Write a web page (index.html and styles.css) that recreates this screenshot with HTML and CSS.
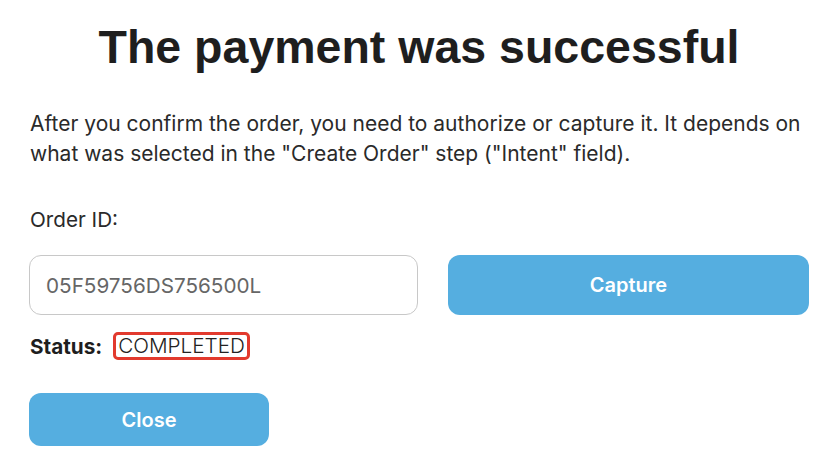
FILE: index.html
```html
<!DOCTYPE html>
<html>
<head>
<meta charset="utf-8">
<link rel="stylesheet" href="styles.css">
</head>
<body>
<div class="modal">
  <h1 class="title">The payment was successful</h1>
  <p class="desc">After you confirm the order, you need to authorize or capture it. It depends on what was selected in the "Create Order" step ("Intent" field).</p>
  <div class="label">Order ID:</div>
  <div class="row">
    <div class="input">05F59756DS756500L</div>
    <button class="btn capture">Capture</button>
  </div>
  <div class="status">
    <span class="status-label">Status:</span>
    <span class="status-value">COMPLETED</span>
  </div>
  <button class="btn close">Close</button>
</div>
</body>
</html>
```
FILE: styles.css
```css
html, body {
  margin: 0;
  padding: 0;
  background: #fff;
}
body {
  font-family: Inter, "Liberation Sans", sans-serif;
  font-size: 20.7px;
  color: #222;
}
.modal {
  width: 780px;
  margin-left: 29px;
  display: flex;
  flex-direction: column;
  align-items: flex-start;
}
.title {
  align-self: stretch;
  font-family: "Liberation Sans", Arial, sans-serif;
  font-weight: 700;
  font-size: 46.5px;
  line-height: 56px;
  margin: 19px 0 0;
  text-align: center;
  color: #1e1e1e;
}
.desc {
  margin: 34px 0 0 1px;
  font-size: 21px;
  line-height: 30px;
  color: #2a2a2a;
}
.label {
  margin: 36px 0 0 1px;
  line-height: 30px;
  color: #2a2a2a;
}
.row {
  align-self: stretch;
  display: flex;
  gap: 30px;
  margin-top: 20px;
}
.input {
  flex: 1;
  height: 60px;
  box-sizing: border-box;
  border: 1px solid #c8c8c8;
  border-radius: 12px;
  padding: 0 16px;
  display: flex;
  align-items: center;
  color: #666;
}
.btn {
  border: none;
  background: #55aee0;
  color: #fff;
  font-family: Inter, "Liberation Sans", sans-serif;
  font-weight: 600;
  font-size: 20px;
  border-radius: 12px;
  cursor: pointer;
  padding: 0;
}
.capture {
  width: 361px;
  height: 60px;
}
.status {
  display: flex;
  align-items: center;
  gap: 11px;
  margin: 17px 0 0 1px;
}
.status-label {
  font-weight: 700;
  color: #1e1e1e;
}
.status-value {
  border: 3px solid #e23a2e;
  border-radius: 5px;
  padding: 0 2px;
  line-height: 22px;
  font-weight: 300;
  color: #222;
}
.close {
  width: 240px;
  height: 53px;
  margin-top: 33px;
}
```
